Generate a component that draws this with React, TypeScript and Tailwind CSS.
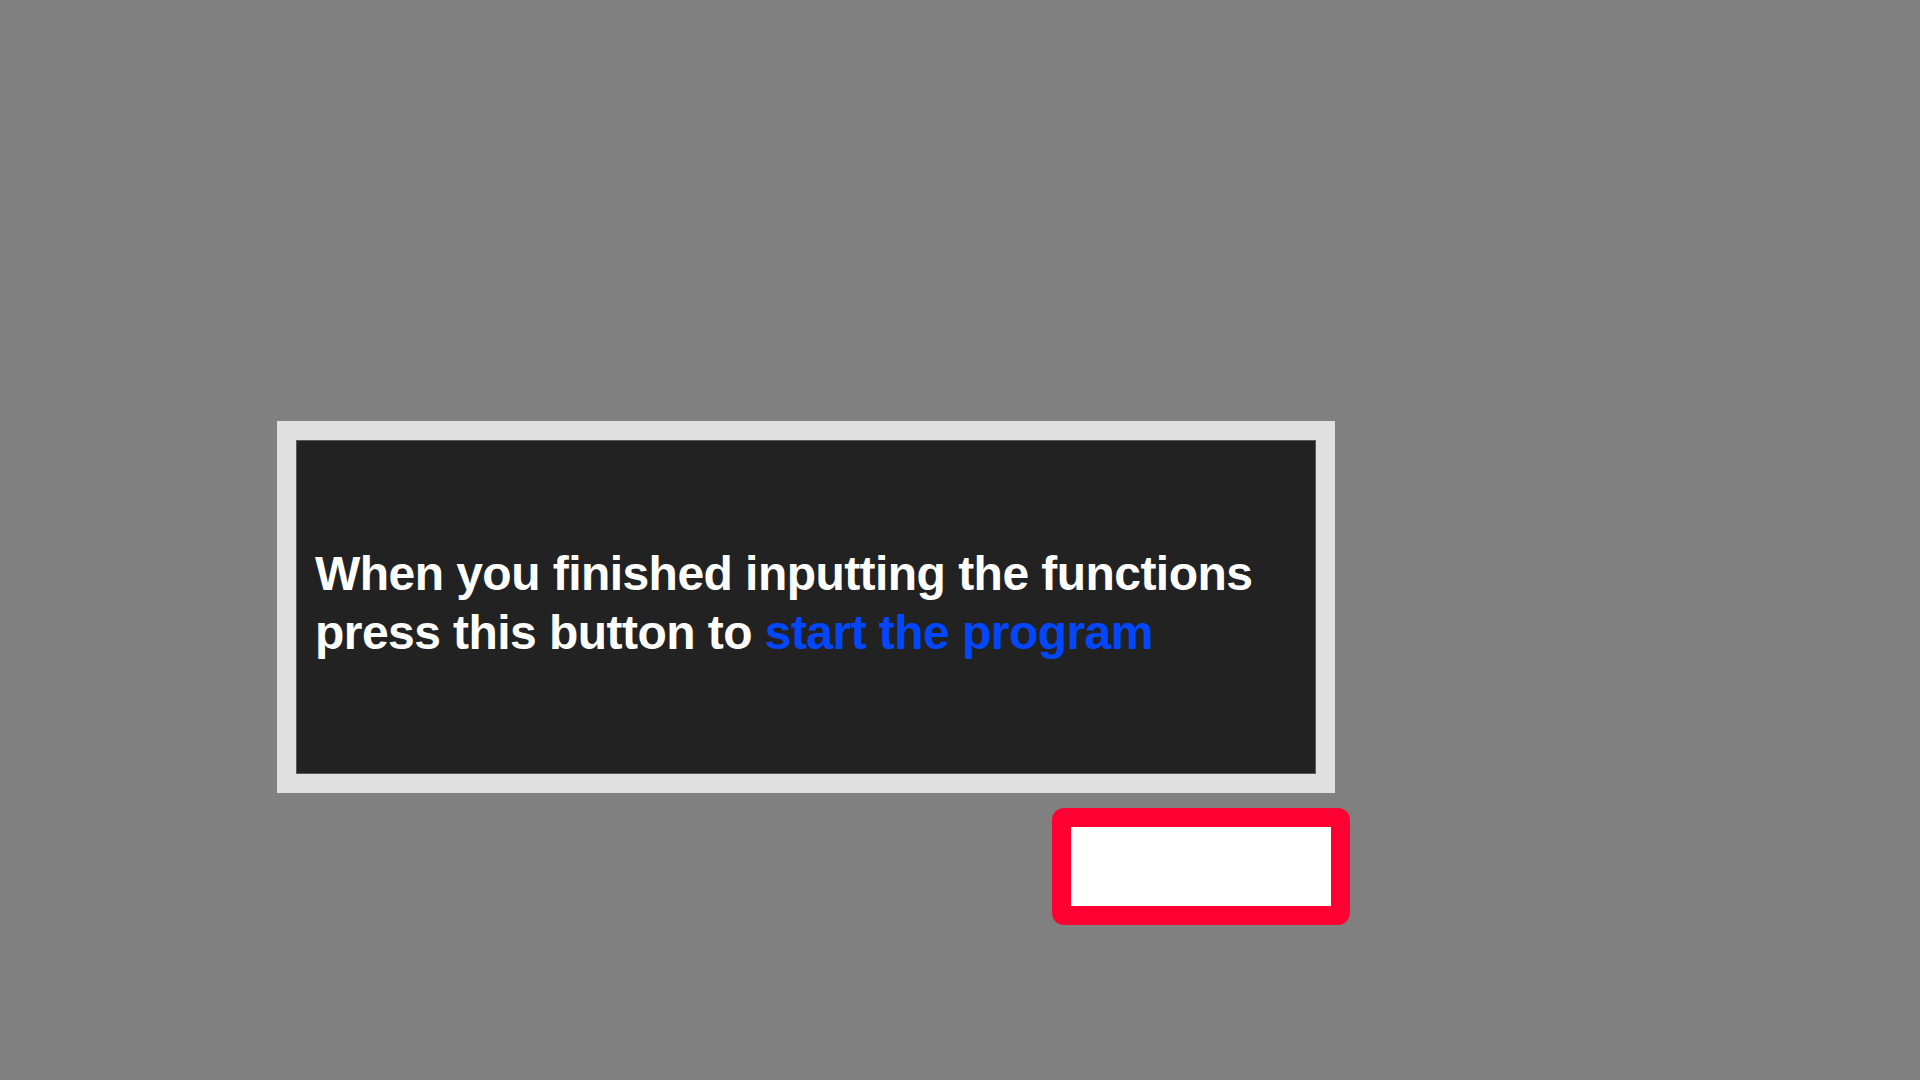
export default function App() {
  return (
    <div className="w-[1920px] h-[1080px] bg-[#808080] relative overflow-hidden" style={{ fontFamily: '"Liberation Sans", Arial, sans-serif' }}>
      <div className="pt-[421px] pl-[277px] flex flex-col">
        <div className="w-[1058px] h-[372px] bg-[#e0e0e0] p-[19px]">
          <div className="w-full h-full bg-[#222222] border border-[#5a5a5a] pl-[18px] pt-[103px]">
            <p className="text-white font-bold text-[48px] leading-[59px] tracking-[-0.55px]">
              When you finished inputting the functions
              <br />
              press this button to <span className="text-[#0047ff]">start the program</span>
            </p>
          </div>
        </div>
        <div className="ml-[775px] mt-[15px] w-[298px] h-[117px] bg-[#ff0033] rounded-[12px] p-[19px]">
          <div className="w-full h-full bg-white" />
        </div>
      </div>
    </div>
  );
}
